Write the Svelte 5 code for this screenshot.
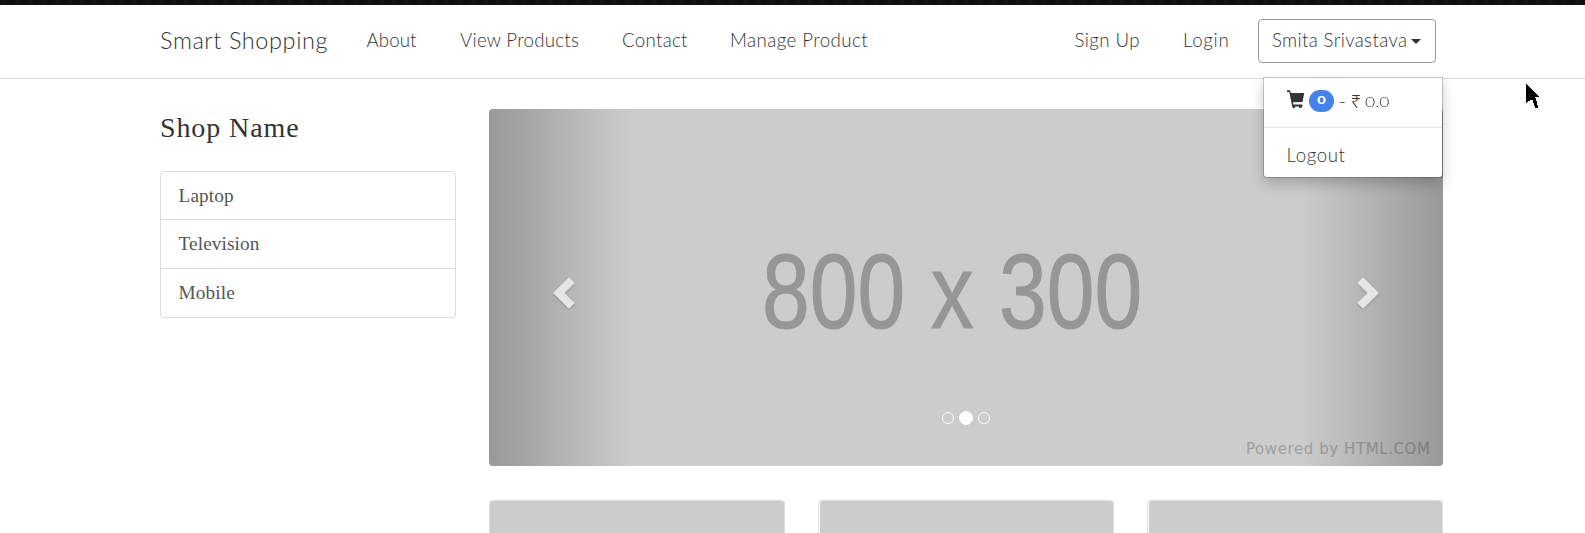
<script>
  const links = [
    { label: 'About', width: 93.5, spacing: 0.1 },
    { label: 'View Products', width: 162, spacing: 0.25 },
    { label: 'Contact', width: 108, spacing: 0.3 },
    { label: 'Manage Product', width: 160, spacing: 0.42 }
  ];
  const categories = ['Laptop', 'Television', 'Mobile'];
</script>

<div class="strip">
  <svg width="100%" height="5">
    <defs>
      <pattern id="weave" width="13" height="5" patternUnits="userSpaceOnUse">
        <path d="M1 3.5 L4.5 0 L8 3.5 M3.5 3.5 L4.5 2.5 L5.5 3.5" fill="none" stroke="#1f1f1f" stroke-width=".8" />
      </pattern>
    </defs>
    <rect width="100%" height="5" fill="#0e0e0e" />
    <rect width="100%" height="4" fill="url(#weave)" />
  </svg>
</div>

<header>
  <div class="container bar">
    <a class="brand" href="#home">Smart Shopping</a>
    <nav>
      {#each links as link}
        <a href="#nav" style="width: {link.width}px; letter-spacing: {link.spacing}px">{link.label}</a>
      {/each}
    </nav>
    <div class="account">
      <a class="signup" href="#signup">Sign Up</a>
      <a class="login" href="#login">Login</a>
      <button class="user"><span>Smita Srivastava</span><i class="caret"></i></button>
    </div>
    <div class="menu">
      <div class="cart">
        <svg width="18" height="19" viewBox="0 0 18 19">
          <path d="M0 .3h2.9l1 2.7H17.2L15.5 12l-9.6.3.5 2.1h9v1.5l-1.1 2h-1.8l-.6-1.5H8.3l-.6 1.5H5.9l-.8-2L2.3 1.9H0z" fill="#333" />
        </svg>
        <span class="badge"><b>0</b></span>
        <span class="dash">-</span><span class="rupee">₹</span><span class="sum">0.0</span>
      </div>
      <div class="logout">Logout</div>
    </div>
  </div>
</header>

<main class="container page">
  <aside>
    <h1>Shop Name</h1>
    <ul>
      {#each categories as category}
        <li>{category}</li>
      {/each}
    </ul>
  </aside>
  <section>
    <div class="carousel">
      <svg class="slide" width="954" height="357">
        <text class="size" transform="translate(273 219) scale(.806 1)">800 x 300</text>
        <text class="powered" x="757" y="345">Powered by HTML.COM</text>
      </svg>
      <div class="control prev">
        <svg width="24" height="34" viewBox="0 0 24 34"><path d="M17 1.3 22.7 7 12.4 17 22.7 27 17 32.7 1 17z" /></svg>
      </div>
      <div class="dots"><i></i><i class="active"></i><i></i></div>
      <div class="control next">
        <svg width="24" height="34" viewBox="0 0 24 34"><path d="M7 1.3 1.3 7 11.6 17 1.3 27 7 32.7 23 17z" /></svg>
      </div>
    </div>
    <div class="thumbs">
      <div><span></span></div>
      <div><span></span></div>
      <div><span></span></div>
    </div>
  </section>
</main>

<svg class="pointer" width="16" height="26" viewBox="0 0 16 26" shape-rendering="crispEdges">
  <path d="M0 0 14 13H9.3L12 22.5V24H9.5L6 15.2 0 19z" />
</svg>

<style>
  :global(body) { margin: 0; background: #fff; overflow: hidden; }
  * { box-sizing: border-box; }
  a { color: inherit; text-decoration: none; white-space: nowrap; }
  .strip { height: 5px; }
  .strip svg { display: block; }
  .container { width: 1283px; margin: 0 0 0 160px; }
  header {
    height: 74px;
    border-bottom: 1px solid #d9d9d9;
    font: 300 18.7px/26px Lato, sans-serif;
    color: #333;
  }
  .bar { position: relative; display: flex; align-items: flex-start; padding-top: 22px; }
  .brand { width: 206.5px; font-size: 23.5px; letter-spacing: .6px; }
  nav { display: flex; }
  .account { display: flex; margin-left: auto; margin-right: 7px; }
  .signup { width: 108.5px; letter-spacing: .4px; }
  .login { width: 75px; letter-spacing: .7px; }
  .user {
    display: flex;
    align-items: center;
    justify-content: space-between;
    width: 178px;
    height: 44px;
    margin-top: -8px;
    padding: 0 14px 2px 13px;
    border: 1px solid #999;
    border-radius: 4px;
    background: #fff;
    color: #333;
    font: inherit;
    letter-spacing: .35px;
  }
  .caret { margin-top: 3px; border: 5px solid transparent; border-top-color: #333; border-bottom: 0; }
  .menu {
    position: absolute;
    z-index: 3;
    top: 72px;
    right: 0;
    width: 180px;
    height: 101px;
    border: 1px solid rgba(0, 0, 0, .2);
    border-radius: 0 0 4px 4px;
    background: #fff;
    background-clip: padding-box;
    box-shadow: 0 6px 13px rgba(0, 0, 0, .2);
  }
  .cart {
    display: flex;
    align-items: flex-start;
    height: 50px;
    padding: 12px 0 0 23px;
    border-bottom: 1px solid #e5e5e5;
  }
  .badge {
    width: 25px;
    height: 22px;
    margin-left: 4px;
    border-radius: 11px;
    background: #4582ec;
    color: #fff;
    font: 700 12px/20px Lato, sans-serif;
    text-align: center;
  }
  .badge b { display: inline-block; transform: scaleX(1.25); }
  .dash { margin-left: 5px; line-height: 22px; }
  .rupee { margin-left: 5px; font: 300 17px/23px "Noto Sans", sans-serif; }
  .sum { margin-left: 4px; font-size: 14px; line-height: 24px; transform: scaleX(1.25); transform-origin: left; }
  .logout { padding: 14px 0 0 22.5px; letter-spacing: .6px; }
  .page { display: flex; padding-top: 30px; }
  aside { width: 296px; margin-right: 33px; font-family: "Liberation Serif", serif; color: #333; }
  h1 { margin: 2px 0 0; font-size: 28px; line-height: 34px; font-weight: 400; letter-spacing: .9px; }
  ul { margin: 26px 0 0; padding: 0; border: 1px solid #ddd; border-radius: 4px; list-style: none; }
  li { height: 49px; padding-left: 17.5px; font-size: 19.3px; line-height: 48px; letter-spacing: .1px; color: #555; }
  li:first-child { height: 47px; line-height: 47px; }
  li + li { border-top: 1px solid #ddd; }
  section { width: 954px; }
  .carousel {
    position: relative;
    display: flex;
    justify-content: space-between;
    height: 357px;
    border-radius: 4px;
    background: #ccc;
    overflow: hidden;
  }
  .slide { position: absolute; inset: 0; }
  .size { font: 106.5px "Liberation Sans", sans-serif; fill: #969696; stroke: #969696; stroke-width: 1px; word-spacing: 2px; }
  .powered { font: 15px "DejaVu Sans", sans-serif; fill: #a0a0a0; letter-spacing: .58px; }
  .control { position: relative; width: 143px; display: flex; align-items: center; padding-top: 10px; }
  .control path { fill: #e5e5e5; filter: drop-shadow(0 1px 1px rgba(0, 0, 0, .2)); }
  .prev { padding-left: 63px; background: linear-gradient(to right, rgba(0, 0, 0, .25), rgba(0, 0, 0, 0)); }
  .next { padding-left: 56px; background: linear-gradient(to left, rgba(0, 0, 0, .25), rgba(0, 0, 0, 0)); }
  .dots { position: relative; display: flex; align-items: center; align-self: flex-end; gap: 5px; height: 14px; margin-bottom: 41px; }
  .dots i { width: 12px; height: 12px; border: 1px solid #fff; border-radius: 50%; }
  .dots .active { width: 14px; height: 14px; background: #fff; }
  .thumbs { display: grid; grid-template-columns: repeat(3, 296px); justify-content: space-between; margin-top: 34px; }
  .thumbs div { height: 33px; padding-left: 1px; border: 1px solid #ddd; border-bottom: 0; border-radius: 4px 4px 0 0; }
  .thumbs div:first-child { padding-left: 0; }
  .thumbs span { display: block; height: 32px; border-radius: 3px 3px 0 0; background: #ccc; }
  .pointer { position: absolute; left: 1526px; top: 84px; }
</style>
